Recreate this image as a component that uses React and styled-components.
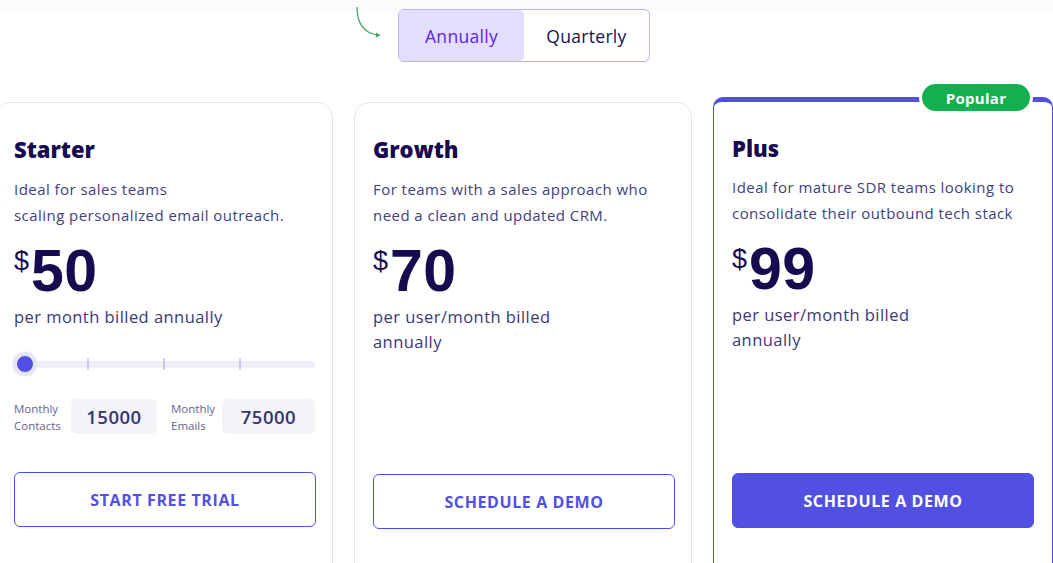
import styled, { createGlobalStyle } from "styled-components";

const Global = createGlobalStyle`
  * { box-sizing: border-box; }
  body {
    margin: 0;
    background: #fff;
    font-family: "Open Sans", "Noto Sans", sans-serif;
    overflow: hidden;
  }
`;

const Page = styled.div`
  width: 1053px;
  height: 563px;
  overflow: hidden;
  background: linear-gradient(#fbfbfc 0, #fbfbfc 12px, #fff 14px);
`;

const ToggleRow = styled.div`
  display: flex;
  justify-content: center;
  padding-top: 9px;
  margin-left: -5px;
`;

const ToggleWrap = styled.div`
  position: relative;
`;

const ArrowWrap = styled.div`
  position: absolute;
  left: -42px;
  top: -2px;
  width: 28px;
  height: 34px;
`;

const Toggle = styled.div`
  display: flex;
  width: 252px;
  height: 53px;
  border: 1px solid #b9b2ef;
  border-radius: 6px;
  overflow: hidden;
`;

const ToggleOption = styled.div`
  flex: ${(p) => (p.$active ? "0 0 125px" : "1")};
  display: flex;
  align-items: center;
  justify-content: center;
  font-size: 17.5px;
  letter-spacing: 0.3px;
  color: ${(p) => (p.$active ? "#5f23ee" : "#1a1150")};
  background: ${(p) => (p.$active ? "#e3defd" : "transparent")};
  border-radius: ${(p) => (p.$active ? "5px" : "0")};
`;

const Cards = styled.div`
  display: flex;
  gap: 21px;
  margin-top: 40px;
  margin-left: -5px;
  align-items: flex-start;
`;

const Card = styled.div`
  position: relative;
  flex: 0 0 ${(p) => (p.$popular ? "340px" : "338px")};
  min-width: 0;
  height: 520px;
  border: 1px solid ${(p) => (p.$popular ? "#5250e2" : "#e4e2f3")};
  border-top-width: ${(p) => (p.$popular ? "5px" : "1px")};
  border-radius: ${(p) => (p.$popular ? "10px" : "15px")};
  margin-top: ${(p) => (p.$popular ? "-5px" : "0")};
  padding: 32px 18px 0 18px;
  display: flex;
  flex-direction: column;
`;

const Badge = styled.div`
  position: absolute;
  top: -21px;
  right: 19px;
  width: 114px;
  height: 33px;
  border: 3px solid #fff;
  background: #14b04f;
  color: #fff;
  border-radius: 20px;
  font-weight: 700;
  font-size: 15px;
  letter-spacing: 0.3px;
  display: flex;
  align-items: center;
  justify-content: center;
`;

const Title = styled.h2`
  margin: 0;
  font-size: 22px;
  font-weight: 800;
  color: #170a4f;
  line-height: 28px;
`;

const Desc = styled.p`
  margin: ${(p) => (p.$tight ? "12px" : "13px")} 0 0 0;
  font-size: 15px;
  line-height: 26px;
  color: #403f7c;
  min-height: 52px;
  letter-spacing: 0.45px;
  white-space: nowrap;
`;

const PriceRow = styled.div`
  display: flex;
  align-items: flex-start;
  margin-top: 13px;
  color: #170a4f;
`;

const Currency = styled.span`
  font-family: "Liberation Sans", Arial, sans-serif;
  font-size: 27px;
  line-height: 30px;
  margin-top: 5px;
  margin-right: 2px;
`;

const Amount = styled.span`
  font-family: "Liberation Sans", Arial, sans-serif;
  font-weight: 700;
  font-size: 59px;
  line-height: 60px;
  letter-spacing: 0.5px;
`;

const Billing = styled.div`
  margin-top: 3px;
  font-size: 16.5px;
  line-height: 25px;
  letter-spacing: 0.45px;
  color: #3a3976;
  max-width: ${(p) => (p.$narrow ? "200px" : "none")};
`;

const Slider = styled.div`
  position: relative;
  margin-top: 23px;
  height: 24px;
  display: flex;
  align-items: center;
`;

const Track = styled.div`
  flex: 1;
  height: 7px;
  margin-left: 12px;
  margin-right: -1px;
  border-radius: 4px;
  background: #f0eff9;
`;

const Tick = styled.span`
  position: absolute;
  top: 6px;
  left: ${(p) => p.$x}px;
  width: 2px;
  height: 12px;
  background: #c9c5f1;
  border-radius: 1px;
`;

const Thumb = styled.span`
  position: absolute;
  left: -1px;
  top: 0;
  width: 24px;
  height: 24px;
  border-radius: 50%;
  background: #5250e2;
  border: 4px solid #e6e5f3;
  box-shadow: 0 0 0 1px #f3f3f8;
`;

const Counts = styled.div`
  display: flex;
  align-items: center;
  margin-top: 23px;
  gap: 14px;
`;

const CountGroup = styled.div`
  display: flex;
  align-items: center;
  gap: 6px;
`;

const CountLabel = styled.span`
  font-size: 11.5px;
  line-height: 17px;
  color: #66648e;
  width: ${(p) => p.$w}px;
`;

const CountBox = styled.div`
  width: ${(p) => p.$w}px;
  height: 35px;
  border-radius: 6px;
  background: #f3f3f8;
  display: flex;
  align-items: center;
  justify-content: center;
  font-size: 18.5px;
  font-weight: 600;
  letter-spacing: 0.5px;
  color: #37356c;
`;

const Spacer = styled.div`
  height: ${(p) => p.$h}px;
  flex: none;
`;

const Button = styled.button`
  width: 302px;
  height: 55px;
  flex: none;
  border-radius: 6px;
  border: 1px solid #5250e2;
  background: ${(p) => (p.$filled ? "#5250e2" : "#fff")};
  color: ${(p) => (p.$filled ? "#fff" : "#5250e2")};
  font-family: "Open Sans", "Noto Sans", sans-serif;
  font-size: 16px;
  font-weight: 700;
  letter-spacing: 0.6px;
  cursor: pointer;
`;

function CurvedArrow() {
  return (
    <svg width="28" height="34" viewBox="0 0 28 34" fill="none">
      <path
        d="M1 0 C1 14 6 26 22 28"
        stroke="#3aa55a"
        strokeWidth="1.2"
        strokeLinecap="round"
      />
      <path d="M20 25.5 L24.5 28.3 L20 30.5 Z" fill="#3aa55a" />
    </svg>
  );
}

export default function App() {
  return (
    <Page>
      <Global />
      <ToggleRow>
        <ToggleWrap>
          <ArrowWrap>
            <CurvedArrow />
          </ArrowWrap>
          <Toggle>
            <ToggleOption $active>Annually</ToggleOption>
            <ToggleOption>Quarterly</ToggleOption>
          </Toggle>
        </ToggleWrap>
      </ToggleRow>

      <Cards>
        <Card>
          <Title>Starter</Title>
          <Desc>
            Ideal for sales teams
            <br />
            scaling personalized email outreach.
          </Desc>
          <PriceRow>
            <Currency>$</Currency>
            <Amount>50</Amount>
          </PriceRow>
          <Billing>per month billed annually</Billing>
          <Slider>
            <Track />
            <Tick $x={73} />
            <Tick $x={149} />
            <Tick $x={225} />
            <Thumb />
          </Slider>
          <Counts>
            <CountGroup>
              <CountLabel $w={51}>Monthly Contacts</CountLabel>
              <CountBox $w={86}>15000</CountBox>
            </CountGroup>
            <CountGroup>
              <CountLabel $w={45}>Monthly Emails</CountLabel>
              <CountBox $w={93}>75000</CountBox>
            </CountGroup>
          </Counts>
          <Spacer $h={38} />
          <Button>START FREE TRIAL</Button>
        </Card>

        <Card>
          <Title>Growth</Title>
          <Desc>
            For teams with a sales approach who
            <br />
            need a clean and updated CRM.
          </Desc>
          <PriceRow>
            <Currency>$</Currency>
            <Amount>70</Amount>
          </PriceRow>
          <Billing $narrow>per user/month billed annually</Billing>
          <Spacer $h={120} />
          <Button>SCHEDULE A DEMO</Button>
        </Card>

        <Card $popular>
          <Badge>Popular</Badge>
          <Title>Plus</Title>
          <Desc $tight>
            Ideal for mature SDR teams looking to
            <br />
            consolidate their outbound tech stack
          </Desc>
          <PriceRow>
            <Currency>$</Currency>
            <Amount>99</Amount>
          </PriceRow>
          <Billing $narrow>per user/month billed annually</Billing>
          <Spacer $h={121} />
          <Button $filled>SCHEDULE A DEMO</Button>
        </Card>
      </Cards>
    </Page>
  );
}
